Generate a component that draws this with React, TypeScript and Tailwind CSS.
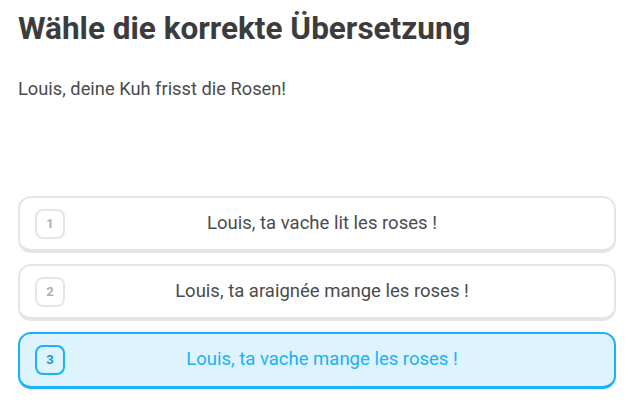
const options = [
  { n: 1, text: 'Louis, ta vache lit les roses !' },
  { n: 2, text: 'Louis, ta araignée mange les roses !' },
  { n: 3, text: 'Louis, ta vache mange les roses !' },
];

const selected = 3;

export default function App() {
  return (
    <div
      className="w-[637px] h-[407px] bg-white px-[18px] pt-[9px]"
      style={{ fontFamily: 'Roboto, "Liberation Sans", sans-serif' }}
    >
      <h1 className="text-[31.5px] font-bold leading-[40px] text-[#3c3c3c]">Wähle die korrekte Übersetzung</h1>
      <p className="mt-[27px] text-[18.3px] leading-[26px] text-[#4b4b4b]">Louis, deine Kuh frisst die Rosen!</p>

      <div className="mt-[94px] flex flex-col gap-[11px] w-[598px]">
        {options.map((o) => {
          const active = o.n === selected;
          return (
            <div
              key={o.n}
              className={
                active
                  ? 'flex h-[57px] items-center rounded-[13px] border-2 border-b-[3px] border-[#1cb0f6] bg-[#ddf4ff] px-[15px]'
                  : 'flex h-[57px] items-center rounded-[13px] border-2 border-b-4 border-[#e5e5e5] bg-white px-[15px]'
              }
            >
              <div
                className={
                  active
                    ? 'flex h-[30px] w-[30px] shrink-0 items-center justify-center rounded-[8px] border-2 border-[#1cb0f6] text-[13px] font-bold text-[#1899d6]'
                    : 'flex h-[30px] w-[30px] shrink-0 items-center justify-center rounded-[8px] border-2 border-[#e5e5e5] text-[13px] font-bold text-[#afafaf]'
                }
              >
                {o.n}
              </div>
              <div
                className={
                  active
                    ? 'flex-1 pr-[20px] text-center text-[18.5px] text-[#1cb0f6]'
                    : 'flex-1 pr-[20px] text-center text-[18.5px] text-[#4b4b4b]'
                }
              >
                {o.text}
              </div>
            </div>
          );
        })}
      </div>
    </div>
  );
}
